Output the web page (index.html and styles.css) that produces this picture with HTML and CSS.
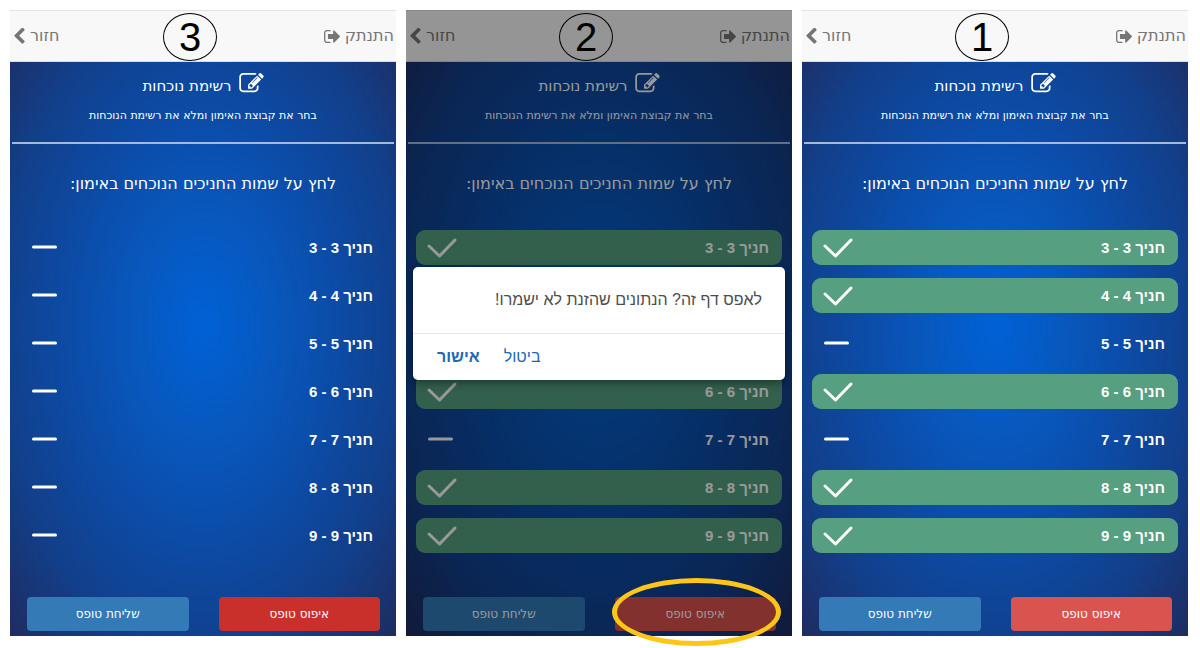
FILE: index.html
```html
<!DOCTYPE html>
<html lang="he" dir="rtl">
<head>
<meta charset="utf-8">
<meta name="viewport" content="width=device-width, initial-scale=1">
<title>רשימת נוכחות</title>
<link rel="stylesheet" href="styles.css">
</head>
<body>
<svg class="sprite" aria-hidden="true">
  <symbol id="edit" viewBox="0 128 1792 1536"><path d="M888 1184l116-116-152-152-116 116v56h96v96h56zm440-720q-16-16-33 1l-350 350q-17 17-1 33t33-1l350-350q17-17 1-33zm80 594v190q0 119-84.500 203.500t-203.500 84.500h-832q-119 0-203.500-84.500t-84.500-203.500v-832q0-119 84.500-203.500t203.500-84.500h832q63 0 117 25 15 7 18 23 3 17-9 29l-49 49q-14 14-32 8-23-6-45-6h-832q-66 0-113 47t-47 113v832q0 66 47 113t113 47h832q66 0 113-47t47-113v-126q0-13 9-22l64-64q15-15 35-7t20 29zm-96-738l288 288-672 672h-288v-288zm444 132l-92 92-288-288 92-92q28-28 68-28t68 28l152 152q28 28 28 68t-28 68z"/></symbol>
  <symbol id="sign-out" viewBox="64 256 1568 1280"><path d="M704 1440q0 4 1 20t.5 26.500-3 23.500-10 19.500-20.500 6.500h-320q-119 0-203.500-84.500t-84.500-203.500v-704q0-119 84.500-203.500t203.500-84.500h320q13 0 22.500 9.500t9.500 22.500q0 4 1 20t.5 26.500-3 23.500-10 19.500-20.500 6.500h-320q-66 0-113 47t-47 113v704q0 66 47 113t113 47h312l11.500 1 11.500 3 8 5.500 7 9 2 13.500zm928-544q0 26-19 45l-544 544q-19 19-45 19t-45-19-19-45v-288h-448q-26 0-45-19t-19-45v-384q0-26 19-45t45-19h448v-288q0-26 19-45t45-19 45 19l544 544q19 19 19 45z"/></symbol>
  <symbol id="chevron" viewBox="390 70 1076 1588"><path d="M1427 301l-531 531 531 531q19 19 19 45t-19 45l-166 166q-19 19-45 19t-45-19l-742-742q-19-19-19-45t19-45l742-742q19-19 45-19t45 19l166 166q19 19 19 45t-19 45z"/></symbol>
  <symbol id="check" viewBox="0 0 32 22"><path d="M3 9L13.500 19L29 3" fill="none" stroke="currentColor" stroke-width="3" stroke-linecap="round" stroke-linejoin="round"/></symbol>
  <symbol id="dash" viewBox="0 0 32 22"><path d="M3.500 10H25.500" fill="none" stroke="currentColor" stroke-width="3" stroke-linecap="round"/></symbol>
</svg>
<main class="steps" id="steps"></main>
<script src="app.js"></script>
</body>
</html>
```

FILE: styles.css
```css
* {
  box-sizing: border-box;
}

body {
  margin: 0;
  background: #fff;
  font-family: "DejaVu Sans", "Open Sans", sans-serif;
}

button {
  font-family: inherit;
  border: 0;
  cursor: pointer;
}

.sprite {
  display: none;
}

.steps {
  display: grid;
  grid-template-columns: repeat(3, 1fr);
  gap: 10px;
  padding: 10px 12px 12px 10px;
}

.phone {
  position: relative;
  display: flex;
  flex-direction: column;
}

.topbar {
  display: flex;
  justify-content: space-between;
  align-items: center;
  height: 52px;
  padding: 0 2px 0 4px;
  background: #f8f8f8;
  border-top: 1px solid #e2e2e2;
  border-bottom: 1px solid #d5deec;
}

.topbar a {
  display: flex;
  align-items: center;
  gap: 5px;
  color: #757575;
  font-size: 16px;
  line-height: 24px;
  text-decoration: none;
}

.topbar svg,
.title svg {
  fill: currentColor;
}

.icon-out {
  width: 16px;
  height: 13px;
}

.icon-back {
  width: 11px;
  height: 16px;
}

.step-number {
  position: absolute;
  z-index: 3;
  top: 3px;
  left: 153px;
  display: grid;
  place-items: center;
  width: 54px;
  height: 48px;
  border: 1px solid #000;
  border-radius: 50%;
  color: #000;
  font: 40px/46px "Liberation Sans", Arial, sans-serif;
}

.screen {
  padding: 10px 10px 5px;
  color: #fff;
  background: radial-gradient(ellipse farthest-corner at 50% 46%, #0061d6 0%, #0858be 25%, #0c4ba6 50%, #123f8a 75%, #1e2c60 100%);
}

.intro {
  margin: 0 -8px;
  height: 72px;
  border-bottom: 2px solid #a3b9de;
  text-align: center;
}

.title {
  display: flex;
  justify-content: center;
  align-items: center;
  gap: 7px;
  margin: 0;
  font-size: 15px;
  font-weight: 400;
  line-height: 28px;
}

.title svg {
  width: 25px;
  height: 21px;
  margin-bottom: 5px;
}

.subtitle {
  margin: 7px 0 0;
  font-size: 11px;
  line-height: 18px;
}

.prompt {
  margin: 26px 0 32px;
  font-size: 16px;
  font-weight: 400;
  line-height: 28px;
  text-align: center;
}

.trainees {
  display: grid;
  gap: 13px;
  margin: 0;
  padding: 0;
  list-style: none;
}

.trainee {
  position: relative;
  display: flex;
  justify-content: space-between;
  align-items: center;
  height: 35px;
  padding: 0 13px 0 10px;
  border-radius: 9px;
  font: bold 15px/20px "Liberation Sans", Arial, sans-serif;
  cursor: pointer;
}

.trainee input {
  position: absolute;
  inset: 0;
  width: 100%;
  height: 100%;
  margin: 0;
  appearance: none;
  cursor: pointer;
}

.trainee svg {
  width: 32px;
  height: 22px;
}

.trainee .mark-check,
.trainee:has(:checked) .mark-dash {
  display: none;
}

.trainee:has(:checked) .mark-check {
  display: block;
}

.trainee:has(:checked) {
  background: #569f80;
}

.actions {
  display: grid;
  grid-template-columns: 1fr 1fr;
  gap: 30px;
  margin: 44px 6px 0 7px;
}

.action {
  height: 34px;
  border-radius: 4px;
  color: #fff;
  background: #337ab7;
  font-size: 12px;
}

.reset {
  background: #d9534f;
}

.reset.pressed {
  background: #c9302c;
}

.overlay {
  position: absolute;
  z-index: 2;
  inset: 0;
  display: grid;
  align-content: center;
  padding: 20px 7px 0;
  background: rgba(0, 0, 0, 0.4);
}

.confirm {
  margin-bottom: 20px;
  border-radius: 5px;
  background: #fff;
  box-shadow: 0 3px 8px rgba(0, 0, 0, 0.4);
  font-family: "Liberation Sans", Arial, sans-serif;
}

.confirm p {
  margin: 0;
  padding: 21px 23px;
  border-bottom: 1px solid #e8e8e8;
  color: #4d4d4d;
  font-size: 16px;
  line-height: 24px;
}

.confirm-actions {
  display: flex;
  justify-content: flex-end;
  gap: 24px;
  padding: 11px 24px;
}

.confirm-actions button {
  padding: 0;
  background: none;
  color: #1c69b5;
  font-size: 16px;
  line-height: 24px;
}

.confirm-actions .ok {
  font-weight: 700;
}

.highlight {
  position: absolute;
  z-index: 3;
  right: 11px;
  bottom: -10px;
  width: 169px;
  height: 68px;
  border: 5px solid #ffc61a;
  border-radius: 50%;
  pointer-events: none;
}
```

FILE: app.js
```js
const trainees = [3, 4, 5, 6, 7, 8, 9];
const screens = [
  { step: 1, present: [3, 4, 6, 8, 9] },
  { step: 2, present: [3, 4, 6, 8, 9], confirm: true },
  { step: 3, present: [], pressed: true }
];

const icon = (name, cls) =>
  `<svg class="${cls}" aria-hidden="true"><use href="#${name}"/></svg>`;

const traineeRow = (n, present) => `
  <li><label class="trainee">
    <input type="checkbox" ${present.includes(n) ? "checked" : ""}>
    <span>חניך ${n} - ${n}</span>
    ${icon("check", "mark-check")}${icon("dash", "mark-dash")}
  </label></li>`;

const confirmDialog = `
  <div class="overlay">
    <div class="confirm" role="dialog" aria-label="אישור איפוס">
      <p>לאפס דף זה? הנתונים שהזנת לא ישמרו!</p>
      <div class="confirm-actions">
        <button type="button">ביטול</button>
        <button type="button" class="ok">אישור</button>
      </div>
    </div>
  </div>
  <div class="highlight"></div>`;

document.getElementById("steps").innerHTML = screens.map(s => `
  <section class="phone">
    <header class="topbar">
      <a href="#logout">התנתק ${icon("sign-out", "icon-out")}</a>
      <a href="#back">חזור ${icon("chevron", "icon-back")}</a>
    </header>
    <span class="step-number">${s.step}</span>
    <div class="screen">
      <div class="intro">
        <h1 class="title">${icon("edit", "icon-edit")}<span>רשימת נוכחות</span></h1>
        <p class="subtitle">בחר את קבוצת האימון ומלא את רשימת הנוכחות</p>
      </div>
      <h2 class="prompt">לחץ על שמות החניכים הנוכחים באימון:</h2>
      <ul class="trainees">${trainees.map(n => traineeRow(n, s.present)).join("")}</ul>
      <div class="actions">
        <button type="button" class="action reset ${s.pressed ? "pressed" : ""}">איפוס טופס</button>
        <button type="button" class="action">שליחת טופס</button>
      </div>
    </div>
    ${s.confirm ? confirmDialog : ""}
  </section>`).join("");
```
